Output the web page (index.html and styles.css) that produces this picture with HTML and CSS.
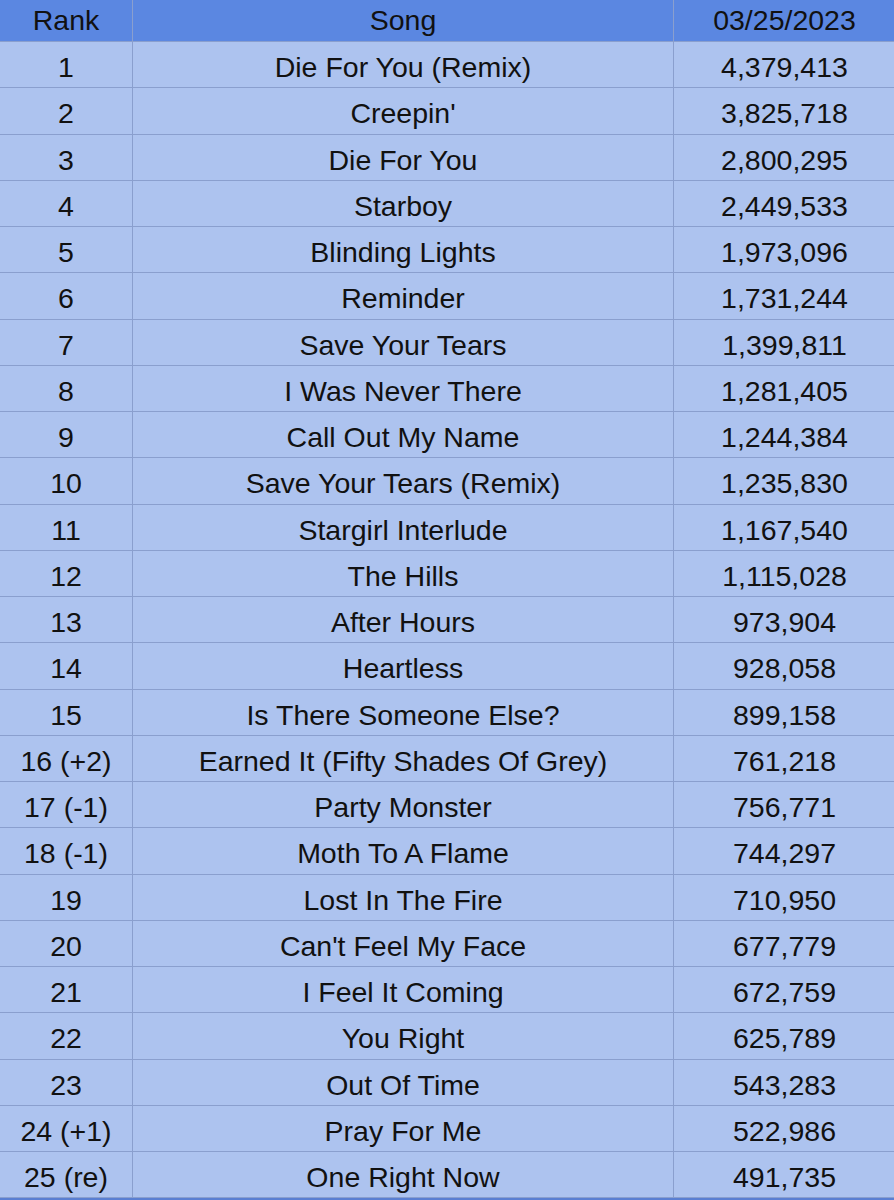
FILE: index.html
```html
<!DOCTYPE html>
<html>
<head>
<meta charset="utf-8">
<link rel="stylesheet" href="styles.css">
</head>
<body>
<div class="chart">
  <div class="cell head">Rank</div><div class="cell head">Song</div><div class="cell head">03/25/2023</div>
  <div class="cell">1</div><div class="cell">Die For You (Remix)</div><div class="cell">4,379,413</div>
  <div class="cell">2</div><div class="cell">Creepin'</div><div class="cell">3,825,718</div>
  <div class="cell">3</div><div class="cell">Die For You</div><div class="cell">2,800,295</div>
  <div class="cell">4</div><div class="cell">Starboy</div><div class="cell">2,449,533</div>
  <div class="cell">5</div><div class="cell">Blinding Lights</div><div class="cell">1,973,096</div>
  <div class="cell">6</div><div class="cell">Reminder</div><div class="cell">1,731,244</div>
  <div class="cell">7</div><div class="cell">Save Your Tears</div><div class="cell">1,399,811</div>
  <div class="cell">8</div><div class="cell">I Was Never There</div><div class="cell">1,281,405</div>
  <div class="cell">9</div><div class="cell">Call Out My Name</div><div class="cell">1,244,384</div>
  <div class="cell">10</div><div class="cell">Save Your Tears (Remix)</div><div class="cell">1,235,830</div>
  <div class="cell">11</div><div class="cell">Stargirl Interlude</div><div class="cell">1,167,540</div>
  <div class="cell">12</div><div class="cell">The Hills</div><div class="cell">1,115,028</div>
  <div class="cell">13</div><div class="cell">After Hours</div><div class="cell">973,904</div>
  <div class="cell">14</div><div class="cell">Heartless</div><div class="cell">928,058</div>
  <div class="cell">15</div><div class="cell">Is There Someone Else?</div><div class="cell">899,158</div>
  <div class="cell">16 (+2)</div><div class="cell">Earned It (Fifty Shades Of Grey)</div><div class="cell">761,218</div>
  <div class="cell">17 (-1)</div><div class="cell">Party Monster</div><div class="cell">756,771</div>
  <div class="cell">18 (-1)</div><div class="cell">Moth To A Flame</div><div class="cell">744,297</div>
  <div class="cell">19</div><div class="cell">Lost In The Fire</div><div class="cell">710,950</div>
  <div class="cell">20</div><div class="cell">Can't Feel My Face</div><div class="cell">677,779</div>
  <div class="cell">21</div><div class="cell">I Feel It Coming</div><div class="cell">672,759</div>
  <div class="cell">22</div><div class="cell">You Right</div><div class="cell">625,789</div>
  <div class="cell">23</div><div class="cell">Out Of Time</div><div class="cell">543,283</div>
  <div class="cell">24 (+1)</div><div class="cell">Pray For Me</div><div class="cell">522,986</div>
  <div class="cell">25 (re)</div><div class="cell">One Right Now</div><div class="cell">491,735</div>
</div>
</body>
</html>
```
FILE: styles.css
```css
html, body {
  margin: 0;
  padding: 0;
  background: #adc3ef;
}
.chart {
  display: grid;
  grid-template-columns: 132px 540px 221px;
  grid-template-rows: 41px repeat(25, 45.25px);
  column-gap: 1px;
  row-gap: 1px;
  background: #8a9fce;
  width: 894px;
  height: 1198.25px;
  border-bottom: 2px solid #5a7fd2;
  font-family: "Liberation Sans", Arial, sans-serif;
  font-size: 28.5px;
  color: #111;
}
.cell {
  background: #adc3ef;
  display: flex;
  align-items: center;
  justify-content: center;
  padding-top: 6px;
  box-sizing: border-box;
  white-space: nowrap;
}
.head {
  background: #5b87e1;
  padding-top: 0;
}
```
